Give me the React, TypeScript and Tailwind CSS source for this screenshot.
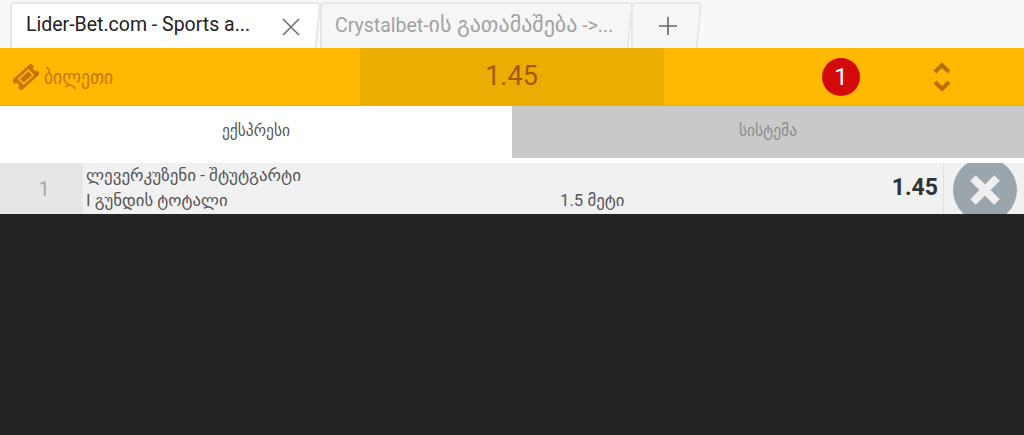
import React from "react";

const font = { fontFamily: "Roboto, 'Noto Sans', 'DejaVu Sans', sans-serif" };

function Tab({ w, active, children }: { w: string; active?: boolean; children: React.ReactNode }) {
  return (
    <div className={`relative h-[46px] ${w} ${active ? "bg-white" : "bg-[#f6f6f6]"} rounded-tl-[5px] border-t-2 border-l-2 border-[#e6e6e6] flex items-center`}>
      <div className={`absolute top-[-2px] right-[-5px] bottom-0 w-[12px] rounded-tr-[5px] -skew-x-[6deg] ${active ? "bg-white" : "bg-[#f6f6f6]"} border-t-2 border-r-2 border-[#e6e6e6]`} />
      <div className="relative flex items-center w-full h-full">{children}</div>
    </div>
  );
}

export default function App() {
  return (
    <div className="w-[1024px] h-[435px] bg-[#232323] overflow-hidden flex flex-col" style={font}>
      <div className="h-[48px] bg-[#f8f8f8] flex items-end pl-[10px] gap-[2px]">
        <Tab w="w-[304px] mr-[4px]" active>
          <span className="ml-[14px] mb-[2px] text-[19.5px] leading-none text-[#222] whitespace-nowrap">Lider-Bet.com - Sports a...</span>
          <svg className="absolute left-[270px] top-[14px]" width="18" height="18" viewBox="0 0 18 18" stroke="#6f6f6f" strokeWidth="1.6" fill="none">
            <path d="M1 1 L17 17 M17 1 L1 17" />
          </svg>
        </Tab>
        <Tab w="w-[306px] mr-[3px]">
          <span className="ml-[13px] mb-[2px] text-[#a2a2a2] whitespace-nowrap leading-none flex items-baseline">
            <span className="text-[19.5px]">Crystalbet-</span>
            <span className="text-[22px]">ის გათამაშება</span>
            <span className="text-[19.5px]">&nbsp;-&gt;...</span>
          </span>
        </Tab>
        <Tab w="w-[64px]">
          <svg className="absolute left-[25px] top-[12px]" width="20" height="20" viewBox="0 0 20 20" stroke="#666" strokeWidth="1.6" fill="none">
            <path d="M10 1 V19 M1 10 H19" />
          </svg>
        </Tab>
      </div>

      <div className="h-[58px] bg-[#ffb901] border-b border-[#d4ab4a] flex items-stretch">
        <div className="w-[360px] flex items-center pl-[13px]">
          <svg width="26" height="26" viewBox="0 0 26 26">
            <g transform="rotate(-42 13 13)">
              <path fill="#c7750a" d="M0 6 H26 V10.5 A2.5 2.5 0 0 0 26 15.5 V20 H0 V15.5 A2.5 2.5 0 0 0 0 10.5 Z" />
              <rect x="6.5" y="9.5" width="13" height="7" fill="none" stroke="#ffb901" strokeWidth="1.6" />
            </g>
          </svg>
          <span className="ml-[5px] text-[20px] leading-none text-[#c7750a] origin-left scale-x-[0.88] whitespace-nowrap">ბილეთი</span>
        </div>
        <div className="w-[304px] bg-[#ecad03] flex items-center justify-center text-[27px] text-[#a8570a] pr-[1px]">1.45</div>
        <div className="flex-1 relative flex items-center">
          <div className="ml-[158px] w-[38px] h-[38px] rounded-full bg-[#d20a0a] flex items-center justify-center text-white text-[24px] leading-none">1</div>
          <svg className="ml-[72px]" width="20" height="32" viewBox="0 0 20 32" stroke="#b9700c" strokeWidth="4" fill="none">
            <path d="M3 11 L10 4 L17 11 M3 21 L10 28 L17 21" />
          </svg>
        </div>
      </div>

      <div className="h-[52px] flex">
        <div className="w-[512px] bg-white flex items-center justify-center text-[15.5px] text-[#555]">ექსპრესი</div>
        <div className="w-[512px] bg-[#c9c9c9] flex items-center justify-center text-[15.5px] text-[#8c8c8c]">სისტემა</div>
      </div>

      <div className="h-[5px] bg-white" />

      <div className="h-[51px] bg-[#f1f1f1] flex relative overflow-hidden">
        <div className="w-[83px] bg-[#e6e6e6] flex items-center justify-center text-[20px] text-[#a9a9a9] pl-[5px]">1</div>
        <div className="flex-1 pl-[3px] relative">
          <div className="text-[17px] leading-[24px] text-[#555] whitespace-nowrap">ლევერკუზენი - შტუტგარტი</div>
          <div className="flex text-[16.8px] leading-[22px] text-[#555] mt-[2px]">
            <span className="w-[474px] whitespace-nowrap">I გუნდის ტოტალი</span>
            <span>1.5 მეტი</span>
          </div>
        </div>
        <div className="w-[81px] border-l border-[#e2e2e2] flex items-center justify-center">
          <div className="w-[64px] h-[64px] rounded-full bg-[#9aa5ad] flex items-center justify-center shrink-0 ml-[1px] mt-[3px]">
            <svg width="32" height="32" viewBox="0 0 32 32" stroke="#efefef" strokeWidth="8" fill="none">
              <path d="M4 4 L28 28 M28 4 L4 28" />
            </svg>
          </div>
        </div>
        <div className="absolute right-[86px] top-[11px] text-[23px] leading-[28px] font-bold text-[#333]">1.45</div>
      </div>
    </div>
  );
}
